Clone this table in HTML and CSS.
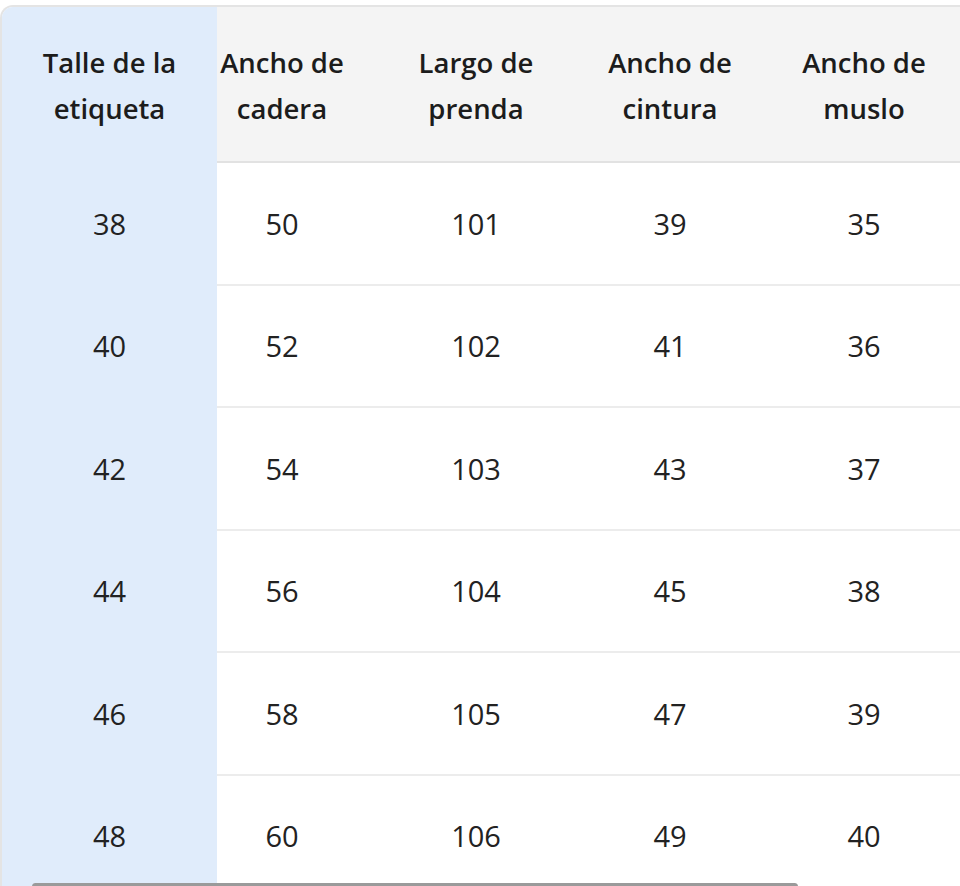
FILE: index.html
```html
<!DOCTYPE html>
<html lang="es">
<head>
<meta charset="utf-8">
<title>Tabla de talles</title>
<link rel="stylesheet" href="styles.css">
</head>
<body>
<div class="card">
  <div class="scroller" id="scroller">
    <table class="size-table">
      <thead>
        <tr>
          <th class="sticky">Talle de la<br>etiqueta</th>
          <th>Ancho de<br>cadera</th>
          <th>Largo de<br>prenda</th>
          <th>Ancho de<br>cintura</th>
          <th>Ancho de<br>muslo</th>
        </tr>
      </thead>
      <tbody>
        <tr><td class="sticky">38</td><td>50</td><td>101</td><td>39</td><td>35</td></tr>
        <tr><td class="sticky">40</td><td>52</td><td>102</td><td>41</td><td>36</td></tr>
        <tr><td class="sticky">42</td><td>54</td><td>103</td><td>43</td><td>37</td></tr>
        <tr><td class="sticky">44</td><td>56</td><td>104</td><td>45</td><td>38</td></tr>
        <tr><td class="sticky">46</td><td>58</td><td>105</td><td>47</td><td>39</td></tr>
        <tr><td class="sticky">48</td><td>60</td><td>106</td><td>49</td><td>40</td></tr>
      </tbody>
    </table>
  </div>
  <div class="thumb"></div>
</div>
<script src="script.js"></script>
</body>
</html>
```

FILE: styles.css
```css
html, body {
  margin: 0;
  padding: 0;
  overflow: hidden;
  background: #ffffff;
}

body {
  font-family: "Open Sans", "Liberation Sans", sans-serif;
  color: #1f1f1f;
}

.card {
  position: relative;
  margin-top: 5px;
  border: 2px solid #e4e4e4;
  border-right: 0;
  border-radius: 13px 0 0 13px;
  overflow: hidden;
}

.scroller {
  overflow-x: auto;
  scrollbar-width: none;
}

.scroller::-webkit-scrollbar {
  display: none;
}

.size-table {
  border-collapse: separate;
  border-spacing: 0;
  table-layout: fixed;
  width: 991px;
}

.size-table th,
.size-table td {
  width: 194px;
  padding: 0;
  text-align: center;
  box-sizing: border-box;
}

.size-table th {
  height: 156px;
  padding-top: 3px;
  background: #f4f4f4;
  border-bottom: 2px solid #e2e2e2;
  font-size: 27.5px;
  font-weight: 600;
  line-height: 46px;
  color: #1c1c1c;
}

.size-table td {
  height: 122.5px;
  border-bottom: 2px solid #ececec;
  font-size: 29px;
  font-weight: 400;
  color: #222222;
}

.size-table .sticky {
  position: sticky;
  left: 0;
  z-index: 2;
  width: 215px;
  background: #e0ecfb;
  border-bottom-color: #e0ecfb;
}

.thumb {
  position: absolute;
  top: 876px;
  left: 30px;
  width: 766px;
  height: 7px;
  border-radius: 4px;
  background: #9a9a9a;
  z-index: 3;
}
```

FILE: script.js
```js
document.getElementById('scroller').scrollLeft = 32;
```
